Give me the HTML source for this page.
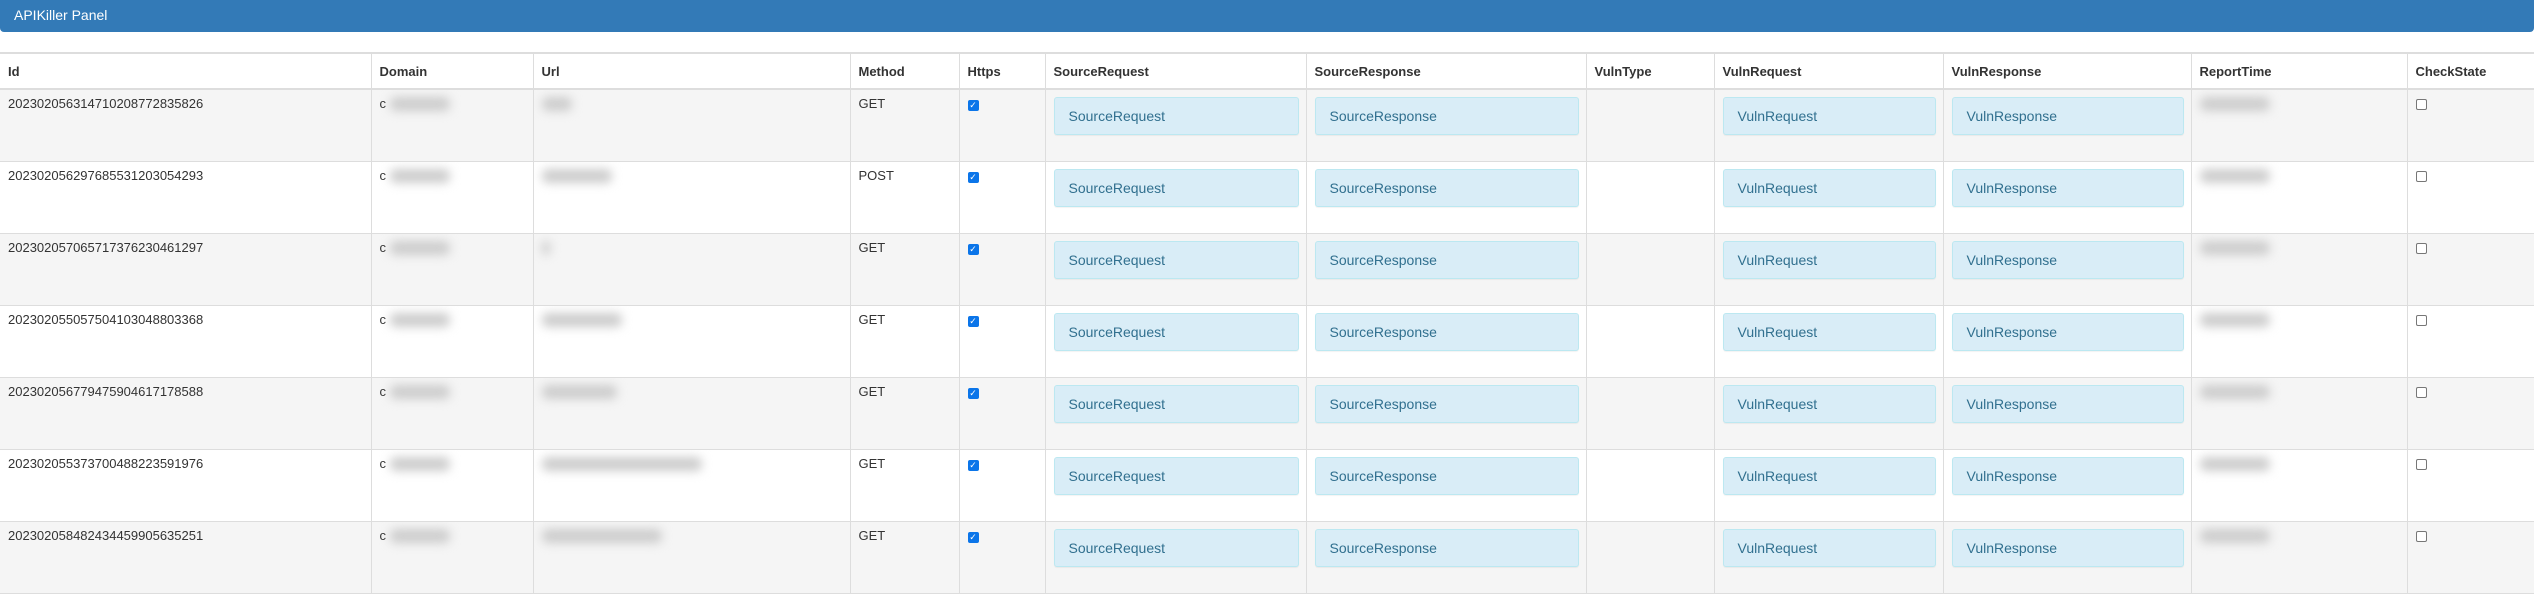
<!DOCTYPE html>
<html><head><style>
body{margin:0;width:2534px;height:591px;overflow:hidden;background:#fff;font-family:"Liberation Sans",Arial,sans-serif;font-size:13px;color:#333}
.hd{position:absolute;left:0;top:0;width:2534px;height:32px;background:#337ab7;border-radius:0 0 4px 4px;color:#fff;font-size:14px;line-height:30px;padding-left:14px;box-sizing:border-box}
table{position:absolute;left:0;top:52px;border-collapse:collapse;table-layout:fixed;width:2534px}
td,th{border:1px solid #ddd;padding:5px 8px 8px;vertical-align:top;text-align:left;line-height:18px;overflow:hidden;white-space:nowrap}
th{height:18px;border-top:2px solid #ddd;border-bottom:2px solid #ddd;font-weight:bold;padding:9px 8px 7px}
tr.r td{height:58px}
tr.r:nth-child(even) td{background:#f5f5f5}
th:first-child,td:first-child{border-left:none}
.b{display:block;box-sizing:border-box;height:38px;background:#d9edf7;border:1px solid #bce8f1;border-radius:3px;color:#31708f;font-size:14px;line-height:36px;padding-left:14px;margin:2px -1px 0 0;box-shadow:0 1px 1px rgba(0,0,0,.05)}
.cb{display:inline-block;width:11px;height:11px;border-radius:2px;background:#0b75e9;color:#fff;font-size:9px;line-height:11px;text-align:center;margin-top:4px}
.ub{display:inline-block;width:9px;height:9px;border:1px solid #777;border-radius:2px;background:#fff;margin-top:4px}
.bl{display:inline-block;height:14px;background:#ccc;filter:blur(5px);border-radius:6px;vertical-align:top;margin-top:2px}
</style></head><body>
<div class="hd">APIKiller Panel</div>
<table>
<colgroup><col style="width:371px"><col style="width:162px"><col style="width:317px"><col style="width:109px"><col style="width:86px"><col style="width:261px"><col style="width:280px"><col style="width:128px"><col style="width:229px"><col style="width:248px"><col style="width:216px"><col style="width:127px"></colgroup>
<tr><th>Id</th><th>Domain</th><th>Url</th><th>Method</th><th>Https</th><th>SourceRequest</th><th>SourceResponse</th><th>VulnType</th><th>VulnRequest</th><th>VulnResponse</th><th>ReportTime</th><th>CheckState</th></tr>
<tr class="r"><td>202302056314710208772835826</td><td>c <span class="bl" style="width:60px"></span></td><td><span class="bl" style="width:30px"></span></td><td>GET</td><td><span class="cb">✓</span></td><td><span class="b">SourceRequest</span></td><td><span class="b">SourceResponse</span></td><td></td><td><span class="b">VulnRequest</span></td><td><span class="b">VulnResponse</span></td><td><span class="bl" style="width:70px"></span></td><td><span class="ub"></span></td></tr>
<tr class="r"><td>202302056297685531203054293</td><td>c <span class="bl" style="width:60px"></span></td><td><span class="bl" style="width:70px"></span></td><td>POST</td><td><span class="cb">✓</span></td><td><span class="b">SourceRequest</span></td><td><span class="b">SourceResponse</span></td><td></td><td><span class="b">VulnRequest</span></td><td><span class="b">VulnResponse</span></td><td><span class="bl" style="width:70px"></span></td><td><span class="ub"></span></td></tr>
<tr class="r"><td>202302057065717376230461297</td><td>c <span class="bl" style="width:60px"></span></td><td><span class="bl" style="width:8px"></span></td><td>GET</td><td><span class="cb">✓</span></td><td><span class="b">SourceRequest</span></td><td><span class="b">SourceResponse</span></td><td></td><td><span class="b">VulnRequest</span></td><td><span class="b">VulnResponse</span></td><td><span class="bl" style="width:70px"></span></td><td><span class="ub"></span></td></tr>
<tr class="r"><td>202302055057504103048803368</td><td>c <span class="bl" style="width:60px"></span></td><td><span class="bl" style="width:80px"></span></td><td>GET</td><td><span class="cb">✓</span></td><td><span class="b">SourceRequest</span></td><td><span class="b">SourceResponse</span></td><td></td><td><span class="b">VulnRequest</span></td><td><span class="b">VulnResponse</span></td><td><span class="bl" style="width:70px"></span></td><td><span class="ub"></span></td></tr>
<tr class="r"><td>202302056779475904617178588</td><td>c <span class="bl" style="width:60px"></span></td><td><span class="bl" style="width:75px"></span></td><td>GET</td><td><span class="cb">✓</span></td><td><span class="b">SourceRequest</span></td><td><span class="b">SourceResponse</span></td><td></td><td><span class="b">VulnRequest</span></td><td><span class="b">VulnResponse</span></td><td><span class="bl" style="width:70px"></span></td><td><span class="ub"></span></td></tr>
<tr class="r"><td>202302055373700488223591976</td><td>c <span class="bl" style="width:60px"></span></td><td><span class="bl" style="width:160px"></span></td><td>GET</td><td><span class="cb">✓</span></td><td><span class="b">SourceRequest</span></td><td><span class="b">SourceResponse</span></td><td></td><td><span class="b">VulnRequest</span></td><td><span class="b">VulnResponse</span></td><td><span class="bl" style="width:70px"></span></td><td><span class="ub"></span></td></tr>
<tr class="r"><td>202302058482434459905635251</td><td>c <span class="bl" style="width:60px"></span></td><td><span class="bl" style="width:120px"></span></td><td>GET</td><td><span class="cb">✓</span></td><td><span class="b">SourceRequest</span></td><td><span class="b">SourceResponse</span></td><td></td><td><span class="b">VulnRequest</span></td><td><span class="b">VulnResponse</span></td><td><span class="bl" style="width:70px"></span></td><td><span class="ub"></span></td></tr>
</table>
</body></html>
